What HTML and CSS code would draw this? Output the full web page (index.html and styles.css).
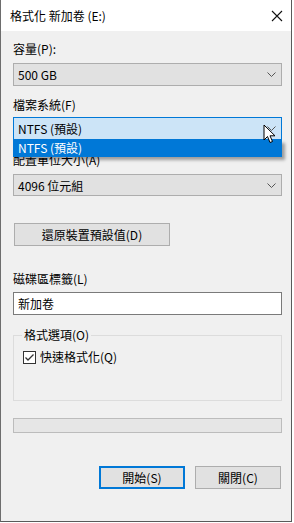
FILE: index.html
```html
<!DOCTYPE html>
<html>
<head>
 <link rel="stylesheet" href="styles.css">
</head>
<body>
<div class="window">
   <div class="titlebar">
      <span class="title">格式化 新加卷 (E:)</span>
      <svg class="closex" width="12" height="12" viewBox="0 0 12 12">
         <path d="M1 1 L11 11 M11 1 L1 11" stroke="#111" stroke-width="1.1" fill="none"/>
      </svg>
   </div>
   <div class="content">
      <div class="label lbl1">容量(P):</div>
      <div class="select sel1">
         <span>500 GB</span>
         <svg class="chev" width="9" height="5" viewBox="0 0 9 5"><polyline points="0.5,0.5 4.5,4.5 8.5,0.5" stroke="#555" fill="none"/></svg>
      </div>

      <div class="label lbl2">檔案系統(F)</div>
      <div class="select sel2 active">
         <span>NTFS (預設)</span>
         <svg class="chev" width="9" height="5" viewBox="0 0 9 5"><polyline points="0.5,0.5 4.5,4.5 8.5,0.5" stroke="#555" fill="none"/></svg>
         <div class="droplist">NTFS (預設)</div>
         <svg class="cursor" width="14" height="21" viewBox="0 0 14 21">
            <path d="M1 1 L1 16 L4.5 12.5 L7 18.5 L9.5 17.5 L7 11.8 L12 11.8 Z" fill="#fff" stroke="#000" stroke-width="1" stroke-linejoin="miter"/>
         </svg>
      </div>

      <div class="label lbl3">配置單位大小(A)</div>
      <div class="select sel3">
         <span>4096 位元組</span>
         <svg class="chev" width="9" height="5" viewBox="0 0 9 5"><polyline points="0.5,0.5 4.5,4.5 8.5,0.5" stroke="#555" fill="none"/></svg>
      </div>

      <div class="btn restore">還原裝置預設值(D)</div>

      <div class="label lbl4">磁碟區標籤(L)</div>
      <div class="textbox">新加卷</div>

      <div class="groupbox">
         <span class="legend">格式選項(O)</span>
         <div class="checkrow">
            <svg class="checkbox" width="13" height="13" viewBox="0 0 13 13">
               <rect x="0.5" y="0.5" width="12" height="12" fill="#fff" stroke="#333"/>
               <polyline points="2.5,6.5 5,9 10.5,3.5" stroke="#333" stroke-width="1.3" fill="none"/>
            </svg>
            <span>快速格式化(Q)</span>
         </div>
      </div>

      <div class="progress"></div>

      <div class="buttons">
         <div class="btn start">開始(S)</div>
         <div class="btn">關閉(C)</div>
      </div>
   </div>
</div>
</body>
</html>
```

FILE: styles.css
```css
* {
   box-sizing: border-box;
}
body {
   margin: 0;
   background: #fff;
   font-family: "Noto Sans CJK TC", "Liberation Sans", sans-serif;
   font-size: 12px;
   color: #000;
}
.window {
   width: 292px;
   height: 522px;
   background: #f0f0f0;
   border-left: 1px solid #6d6d6d;
   border-right: 1px solid #5a5a5a;
   border-bottom: 1px solid #5a5a5a;
}
.titlebar {
   height: 31px;
   background: #fff;
   display: flex;
   align-items: center;
   justify-content: space-between;
   padding-left: 9px;
   padding-right: 8px;
}
.title {
   line-height: 16px;
}
.content {
   padding: 0 9px 0 12px;
}
.label {
   line-height: 16px;
   height: 16px;
}
.lbl1 { margin-top: 10px; }
.lbl2 { margin-top: 11px; }
.lbl3 { margin-top: 12px; }
.lbl4 { margin-top: 25px; }

.select {
   position: relative;
   height: 23px;
   background: #e1e1e1;
   border: 1px solid #adadad;
   display: flex;
   align-items: center;
   justify-content: space-between;
   padding: 0 5px 0 4px;
}
.sel1 { margin-top: 6px; }
.sel2 { margin-top: 4px; }
.sel3 { margin-top: 6px; height: 22px; }
.select.active {
   background: #cce4f7;
   border-color: #0078d7;
}
.droplist {
   position: absolute;
   left: -1px;
   right: -1px;
   top: 22px;
   height: 17px;
   background: #0078d7;
   color: #fff;
   line-height: 16px;
   padding-left: 5px;
   box-shadow: 3px 3px 3px rgba(0, 0, 0, 0.35);
}
.cursor {
   position: absolute;
   right: 4px;
   top: 6px;
}
.btn {
   height: 23px;
   background: #e1e1e1;
   border: 1px solid #adadad;
   display: flex;
   align-items: center;
   justify-content: center;
}
.restore {
   width: 156px;
   margin-top: 27px;
   margin-left: 1px;
}
.textbox {
   margin-top: 5px;
   height: 23px;
   background: #fff;
   border: 1px solid #7a7a7a;
   line-height: 21px;
   padding-left: 4px;
}
.groupbox {
   position: relative;
   margin-top: 20px;
   height: 66px;
   border: 1px solid #dcdcdc;
   padding: 13px 0 0 9px;
}
.legend {
   position: absolute;
   top: -9px;
   left: 8px;
   padding: 0 2px;
   background: #f0f0f0;
   line-height: 16px;
}
.checkrow {
   display: flex;
   align-items: center;
   gap: 4px;
   line-height: 16px;
}
.progress {
   margin-top: 17px;
   height: 15px;
   background: #e6e6e6;
   border: 1px solid #bcbcbc;
}
.buttons {
   display: flex;
   justify-content: flex-end;
   gap: 10px;
   margin-top: 33px;
   padding-right: 1px;
}
.buttons .btn {
   width: 86px;
}
.btn.start {
   border: 2px solid #0078d7;
}
```
